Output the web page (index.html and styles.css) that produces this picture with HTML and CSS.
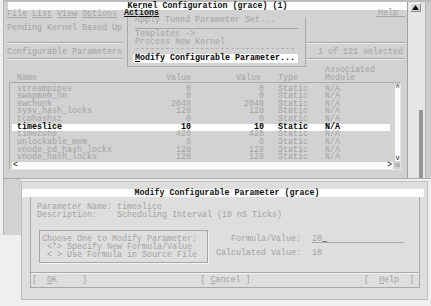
FILE: index.html
```html
<!DOCTYPE html>
<html lang="en">
<head>
  <meta charset="UTF-8" />
  <title>Kernel Configuration (grace)</title>
  <link rel="stylesheet" href="styles.css">
</head>
<body>
<div class="screen">

  <div class="win-top">
    <div class="main">
      <div class="titlebar">Kernel Configuration (grace) (1)</div>
      <div class="menubar">
        <span class="menu-group"><span class="mi">File</span> <span class="mi">List</span> <span class="mi">View</span> <span class="mi">Options</span></span>
        <span class="mi active">Actions</span>
        <span class="mi help">Help</span>
      </div>
      <div class="pending">Pending Kernel Based Upon: Current Kernel</div>
      <div class="configrow">
        <span>Configurable Parameters</span>
        <span>1 of 121 selected</span>
      </div>

      <div class="head cols">
        <span>Name</span>
        <span class="num">Value</span>
        <span class="num val2">Value</span>
        <span class="type">Type</span>
        <span>Associated<br>Module</span>
      </div>

      <div class="listbox">
        <div class="listbody">
          <div class="rows">
            <div class="row cols"><span>streampipes</span><span class="num">0</span><span class="num">0</span><span class="type">Static</span><span>N/A</span></div>
            <div class="row cols"><span>swapmem_on</span><span class="num">0</span><span class="num">0</span><span class="type">Static</span><span>N/A</span></div>
            <div class="row cols"><span>swchunk</span><span class="num">2048</span><span class="num">2048</span><span class="type">Static</span><span>N/A</span></div>
            <div class="row cols"><span>sysv_hash_locks</span><span class="num">128</span><span class="num">128</span><span class="type">Static</span><span>N/A</span></div>
            <div class="row cols"><span>tcphashsz</span><span class="num">0</span><span class="num">0</span><span class="type">Static</span><span>N/A</span></div>
            <div class="row cols sel"><span>timeslice</span><span class="num">10</span><span class="num">10</span><span class="type">Static</span><span>N/A</span></div>
            <div class="row cols"><span>timezone</span><span class="num">420</span><span class="num">420</span><span class="type">Static</span><span>N/A</span></div>
            <div class="row cols"><span>unlockable_mem</span><span class="num">0</span><span class="num">0</span><span class="type">Static</span><span>N/A</span></div>
            <div class="row cols"><span>vnode_cd_hash_locks</span><span class="num">128</span><span class="num">128</span><span class="type">Static</span><span>N/A</span></div>
            <div class="row cols"><span>vnode_hash_locks</span><span class="num">128</span><span class="num">128</span><span class="type">Static</span><span>N/A</span></div>
          </div>
          <div class="lvscroll"><span>^</span><span>v</span></div>
        </div>
        <div class="lhscroll">
          <div class="hs-bar"><span>&lt;</span><span>&gt;</span></div>
          <div class="hs-corner"></div>
        </div>
      </div>
    </div>

    <div class="win-vs">
      <div class="vs-up">
        <svg width="7" height="5" viewBox="0 0 7 5"><polygon points="3.5,0 7,5 0,5" fill="#111"/></svg>
      </div>
      <div class="vs-thumb"></div>
    </div>
    <div class="win-edge"></div>
  </div>

  <!-- Actions menu, opened over the window -->
  <div class="dropdown">
    <div class="dd-box">
      <div class="dd-item">Apply Tuned Parameter Set...</div>
      <div class="dd-sep"></div>
      <div class="dd-item">Templates -&gt;</div>
      <div class="dd-item">Process New Kernel</div>
      <div class="dd-item">--------------------------------</div>
      <div class="dd-item dd-sel"><u>M</u>odify Configurable Parameter...</div>
    </div>
  </div>

  <div class="lower">
    <div class="behind"></div>
    <div class="dialog">
      <div class="dlg-title">Modify Configurable Parameter (grace)</div>
      <div class="frame">
        <div class="info">
          <div class="ln">Parameter Name: timeslice</div>
          <div class="ln">Description:    Scheduling Interval (10 nS Ticks)</div>
        </div>
        <div class="choose">
          <div class="radiobox">
            <div class="ln">Choose One to Modify Parameter:</div>
            <div class="ln"> &lt;*&gt; Specify New Formula/Value</div>
            <div class="ln"> &lt; &gt; Use Formula in Source File</div>
          </div>
          <div class="fields">
            <span class="label">Formula/Value:</span>
            <span class="input">20<span class="cursor">_</span></span>
            <span class="label">Calculated Value:</span>
            <span>10</span>
          </div>
        </div>
        <div class="sep"></div>
        <div class="buttons">
          <span class="ln">[  <u>O</u>K     ]</span>
          <span class="ln">[ <u>C</u>ancel ]</span>
          <span class="ln">[  <u>H</u>elp  ]</span>
        </div>
      </div>
    </div>
  </div>

</div>
</body>
</html>
```

FILE: styles.css
```css
* {
  box-sizing: border-box;
}
body {
  margin: 0;
  background-color: #efefef;
  font-family: "Liberation Mono", "DejaVu Sans Mono", monospace;
  font-size: 8.33px;
  line-height: 8px;
  color: #a3a3a3;
}
.screen {
  position: relative;
  width: 431px;
  height: 306px;
  overflow: hidden;
}
.ln {
  white-space: pre;
}

/* main window */
.win-top {
  display: flex;
  height: 179px;
  margin-left: 3px;
  background-color: #d2d2d2;
  border-top: 2px solid #bcbcbc;
  border-left: 1px solid #b4b4b4;
  border-bottom: 1px solid #a9a9a9;
}
.main {
  width: 403px;
  padding-left: 3px;
}
.titlebar {
  height: 8px;
  margin-left: 1px;
  background-color: #fdfdfd;
  color: #111;
  font-weight: bold;
  text-align: center;
  white-space: nowrap;
}
.menubar {
  display: flex;
  height: 7px;
  padding-right: 2px;
}
.mi {
  display: inline-block;
  height: 7px;
  line-height: 6.5px;
  border-bottom: 1px solid #a6a6a6;
}
.mi.active {
  margin-left: 7px;
  color: #111;
  font-weight: bold;
  border-bottom-color: #111;
}
.mi.help {
  margin-left: auto;
  padding: 0 7px 0 2px;
}
.pending {
  height: 26px;
  padding-top: 7px;
  margin-right: 2px;
  white-space: nowrap;
  overflow: hidden;
  border-bottom: 1px solid #a6a6a6;
  box-shadow: 0 1px 0 #ececec;
}
.configrow {
  display: flex;
  justify-content: space-between;
  height: 16px;
  padding: 5px 2px 0 0;
  margin-right: 2px;
  border-bottom: 1px solid #a6a6a6;
  box-shadow: 0 1px 0 #ececec;
}

/* columns */
.cols {
  display: grid;
  grid-template-columns: 124px 50px 73px 61px 1fr;
  white-space: nowrap;
}
.num {
  text-align: right;
}
.type {
  padding-left: 14px;
}
.head {
  height: 23px;
  padding: 3px 0 0 10px;
  align-items: end;
}
.head .val2 {
  padding-right: 3px;
}

/* list */
.listbox {
  width: 392px;
  height: 88px;
  margin-left: 2px;
  padding-top: 2.5px;
  border: 1px solid #a9a9a9;
  border-right-color: #e6e6e6;
  border-bottom-color: #e6e6e6;
}
.listbody {
  display: flex;
}
.rows {
  width: 378px;
  margin-left: 2px;
}
.row {
  height: 7.66px;
  line-height: 7.66px;
  padding-left: 5px;
}
.row.sel {
  background-color: #ffffff;
  color: #000;
  font-weight: bold;
}
.lvscroll {
  display: flex;
  flex-direction: column;
  justify-content: space-between;
  width: 5px;
  height: 75.5px;
  margin-left: 5px;
  background-color: #fbfbfb;
  color: #111;
  font-size: 7px;
  line-height: 5px;
  text-align: center;
}
.lhscroll {
  display: flex;
  align-items: center;
  height: 6.5px;
}
.hs-bar {
  display: flex;
  justify-content: space-between;
  width: 381px;
  height: 6.5px;
  margin-left: 2px;
  padding: 0 1px;
  background-color: #fbfbfb;
  color: #111;
  line-height: 6.5px;
}
.hs-corner {
  width: 5px;
  height: 4px;
  margin-left: 2px;
  background-color: #b4b4b4;
}

/* window scrollbar */
.win-vs {
  display: flex;
  flex-direction: column;
  width: 18px;
  background-color: #e6e6e6;
  border-left: 1px solid #a0a0a0;
}
.vs-up {
  display: flex;
  align-items: center;
  justify-content: center;
  width: 11px;
  height: 9px;
  margin: 1px 0 0 2px;
  background-color: #d6d6d6;
  border: 1px solid #f6f6f6;
  border-right-color: #8e8e8e;
  border-bottom-color: #8e8e8e;
}
.vs-thumb {
  flex: 1;
  width: 4px;
  margin: 98px 0 0 11px;
  background-color: #949494;
}
.win-edge {
  width: 6px;
  background-color: #cacaca;
  border-left: 1px solid #b6b6b6;
}

/* Actions menu */
.dropdown {
  position: absolute;
  left: 122px;
  top: 17px;
  width: 184px;
  height: 50px;
  padding-left: 5px;
  background-color: #d2d2d2;
}
.dd-box {
  height: 50px;
  border: 1px solid #a9a9a9;
  border-top: none;
}
.dd-item {
  height: 7.5px;
  line-height: 7.5px;
  padding-left: 7px;
  white-space: pre;
}
.dd-sep {
  margin: 3px 7px 2.5px;
  border-top: 1px solid #a4a4a4;
}
.dd-sel {
  height: 9px;
  line-height: 9px;
  margin: 0.5px 7px 0 5px;
  padding-left: 2px;
  background-color: #ffffff;
  color: #000;
  font-weight: bold;
}

/* dialog */
.lower {
  display: flex;
}
.behind {
  width: 18px;
  height: 56px;
  margin-left: 3px;
  background-color: #d2d2d2;
  border-left: 1px solid #b4b4b4;
}
.dialog {
  width: 407px;
  height: 119px;
  margin-top: 2px;
  padding-top: 7px;
  background-color: #dedede;
  border: 1px solid #bdbdbd;
}
.dlg-title {
  height: 8px;
  margin-right: 3px;
  padding-left: 8px;
  background-color: #fdfdfd;
  color: #111;
  font-weight: bold;
  text-align: center;
  white-space: nowrap;
}
.frame {
  margin: 0 7px 0 8px;
  padding-bottom: 3px;
  border: 1px solid #a8a8a8;
  border-top: none;
}
.info {
  padding: 6px 0 0 6px;
}
.choose {
  display: flex;
  align-items: flex-start;
  margin-top: 11px;
}
.radiobox {
  width: 169px;
  margin-left: 8px;
  padding: 3.5px 0 3px 2px;
  border: 1px solid #a6a6a6;
  box-shadow: 1px 1px 0 #f2f2f2;
}
.fields {
  display: grid;
  grid-template-columns: 86px 92px;
  column-gap: 11px;
  row-gap: 6px;
  margin: 5px 0 0 7px;
  white-space: nowrap;
}
.label {
  text-align: right;
}
.input {
  height: 8px;
  border-bottom: 1px solid #a8a8a8;
}
.cursor {
  color: #111;
}
.sep {
  margin-top: 9.5px;
  border-top: 1px solid #a8a8a8;
  box-shadow: 0 1px 0 #f2f2f2;
}
.buttons {
  display: flex;
  justify-content: space-between;
  padding: 3px 5px 0 1px;
}
```
